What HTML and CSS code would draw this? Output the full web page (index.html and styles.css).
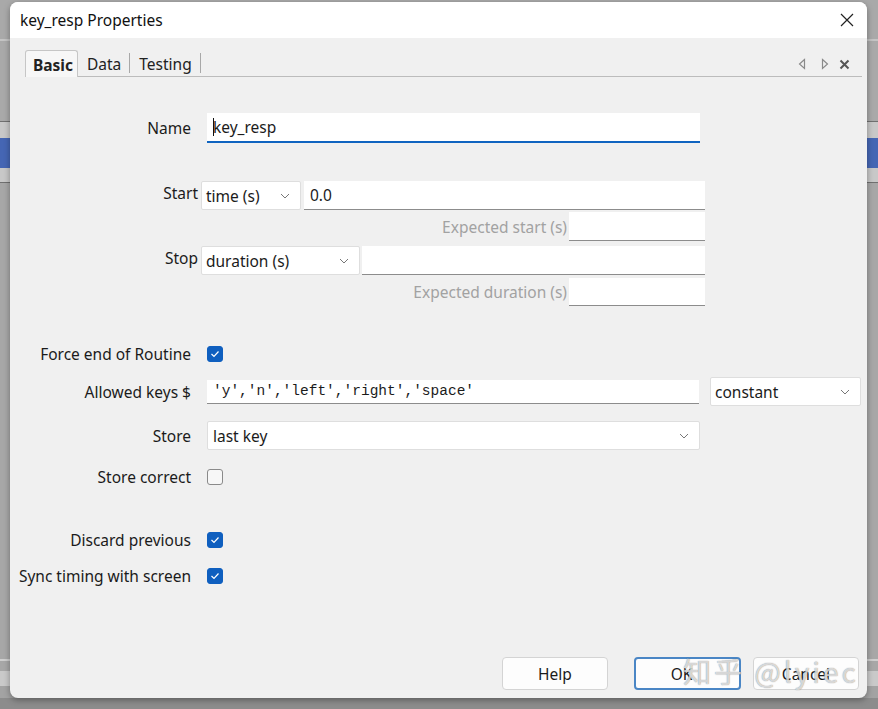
FILE: index.html
```html
<!DOCTYPE html>
<html lang="en">
<head>
    <meta charset="UTF-8">
    <meta name="viewport" content="width=device-width, initial-scale=1.0">
    <title>key_resp Properties</title>
    <link rel="stylesheet" href="styles.css">
</head>
<body>
<div class="window">
    <div class="titlebar">
        <span class="title">key_resp Properties</span>
        <svg class="close" width="14" height="14" viewBox="0 0 14 14">
            <path d="M1 1L13 13M13 1L1 13" stroke="#222" stroke-width="1.2" fill="none"/>
        </svg>
    </div>

    <div class="tabs">
        <div class="tab active">Basic</div>
        <div class="tab">Data</div>
        <div class="tab-sep"></div>
        <div class="tab">Testing</div>
        <div class="tab-sep"></div>
        <div class="tab-nav">
            <svg width="8" height="12" viewBox="0 0 8 12"><path d="M6.5 1.5L1.5 6L6.5 10.5Z" stroke="#8a8a8a" stroke-width="1.2" fill="none"/></svg>
            <svg width="8" height="12" viewBox="0 0 8 12"><path d="M1.5 1.5L6.5 6L1.5 10.5Z" stroke="#8a8a8a" stroke-width="1.2" fill="none"/></svg>
            <svg class="tab-close" width="11" height="11" viewBox="0 0 11 11"><path d="M1.5 1.5L9.5 9.5M9.5 1.5L1.5 9.5" stroke="#555" stroke-width="2" fill="none"/></svg>
        </div>
    </div>

    <div class="form">
        <div class="row name-row">
            <label class="label">Name</label>
            <div class="input focused w-name"><span class="caret"></span>key_resp</div>
        </div>

        <div class="row timing start-row">
            <label class="label">Start</label>
            <div class="select w-start">time (s)<svg class="chev" width="10" height="6" viewBox="0 0 10 6"><path d="M1 1L5 5L9 1" stroke="#777" fill="none"/></svg></div>
            <div class="input w-start-val">0.0</div>
        </div>
        <div class="row expected exp-start">
            <label class="label">Expected start (s)</label>
            <div class="input w-exp"></div>
        </div>

        <div class="row timing stop-row">
            <label class="label">Stop</label>
            <div class="select w-stop">duration (s)<svg class="chev" width="10" height="6" viewBox="0 0 10 6"><path d="M1 1L5 5L9 1" stroke="#777" fill="none"/></svg></div>
            <div class="input w-stop-val"></div>
        </div>
        <div class="row expected exp-stop">
            <label class="label">Expected duration (s)</label>
            <div class="input w-exp"></div>
        </div>

        <div class="row check-row force-row">
            <label class="label">Force end of Routine</label>
            <span class="checkbox checked"><svg width="10" height="8" viewBox="0 0 10 8"><path d="M1.5 4L4 6.5L8.5 1.5" stroke="#fff" stroke-width="1.2" fill="none"/></svg></span>
        </div>

        <div class="row keys-row">
            <label class="label">Allowed keys $</label>
            <div class="input mono w-keys">'y','n','left','right','space'</div>
            <div class="select w-const">constant<svg class="chev" width="10" height="6" viewBox="0 0 10 6"><path d="M1 1L5 5L9 1" stroke="#777" fill="none"/></svg></div>
        </div>

        <div class="row store-row">
            <label class="label">Store</label>
            <div class="select w-store">last key<svg class="chev" width="10" height="6" viewBox="0 0 10 6"><path d="M1 1L5 5L9 1" stroke="#777" fill="none"/></svg></div>
        </div>

        <div class="row check-row correct-row">
            <label class="label">Store correct</label>
            <span class="checkbox"></span>
        </div>

        <div class="row check-row discard-row">
            <label class="label">Discard previous</label>
            <span class="checkbox checked"><svg width="10" height="8" viewBox="0 0 10 8"><path d="M1.5 4L4 6.5L8.5 1.5" stroke="#fff" stroke-width="1.2" fill="none"/></svg></span>
        </div>

        <div class="row check-row sync-row">
            <label class="label">Sync timing with screen</label>
            <span class="checkbox checked"><svg width="10" height="8" viewBox="0 0 10 8"><path d="M1.5 4L4 6.5L8.5 1.5" stroke="#fff" stroke-width="1.2" fill="none"/></svg></span>
        </div>
    </div>

    <div class="buttons">
        <button class="btn">Help</button>
        <button class="btn default">OK</button>
        <button class="btn">Cancel</button>
    </div>
</div>
<div class="watermark">知乎 @lyiec</div>
</body>
</html>
```

FILE: styles.css
```css
* {
    margin: 0;
    padding: 0;
    box-sizing: border-box;
}

html, body {
    width: 100%;
    height: 100%;
}

body {
    font-family: "Noto Sans", "Liberation Sans", sans-serif;
    font-size: 15.5px;
    color: #1b1b1b;
    overflow: hidden;
    background: linear-gradient(to bottom,
        #a9a9a9 0 39px, #c4c4c4 39px 41px, #a9a9a9 41px 121px,
        #707070 121px 122px, #c8c8c8 122px 138px,
        #4566b4 138px 168px, #c8c8c8 168px 182px,
        #707070 182px 183px, #a7a7a7 183px 659px,
        #cfcfcf 659px 661px, #a7a7a7 661px 671px,
        #c9c9c9 671px 686px, #a3a3a3 686px 698px, #8c8c8c 698px);
    padding-top: 2px;
    padding-left: 10px;
}

.window {
    width: 857px;
    height: 696px;
    background: #f0f0f0;
    border-radius: 8px;
    display: flex;
    flex-direction: column;
    overflow: hidden;
    box-shadow: 0 2px 6px rgba(0, 0, 0, 0.35);
}

.titlebar {
    height: 36px;
    background: #fff;
    display: flex;
    align-items: center;
    justify-content: space-between;
    padding: 0 13px 0 10px;
}

.title {
    font-size: 15.5px;
    color: #111;
}

/* tab strip */
.tabs {
    height: 39px;
    margin: 0 5px 0 15px;
    padding-top: 12px;
    display: flex;
    align-items: flex-end;
    border-bottom: 1px solid #bcbcbc;
}

.tab {
    height: 26px;
    padding: 0 8px 0 9px;
    line-height: 29px;
    font-size: 15.5px;
    color: #222;
}

.tab.active {
    font-weight: bold;
    background: #f7f7f7;
    border: 1px solid #c6c6c6;
    border-bottom: none;
    border-radius: 3px 3px 0 0;
    padding: 0 3px 0 7px;
    width: 53px;
    margin-bottom: -1px;
    height: 27px;
    line-height: 28px;
}

.tab-sep {
    width: 1px;
    height: 20px;
    background: #a8a8a8;
    margin-bottom: 3px;
}

.tab-nav {
    margin-left: auto;
    align-self: center;
    display: flex;
    align-items: center;
    gap: 15px;
    padding-right: 12px;
    padding-top: 2px;
}

.tab-nav .tab-close {
    margin-left: -5px;
}

/* property rows */
.form {
    display: flex;
    flex-direction: column;
}

.row {
    display: flex;
    align-items: center;
    height: 29px;
}

.label {
    width: 181px;
    margin-right: 16px;
    text-align: right;
    white-space: nowrap;
}

.row.timing .label {
    width: 188px;
    margin-right: 3px;
    align-self: flex-start;
    padding-top: 1px;
}

.row.expected .label {
    width: 557px;
    margin-right: 2px;
    color: #a2a2a2;
}

.name-row { margin-top: 36px; height: 30px; }
.start-row { margin-top: 38px; }
.exp-start { margin-top: 2px; }
.stop-row { margin-top: 5px; }
.exp-stop { margin-top: 3px; height: 28px; }
.force-row { margin-top: 36px; height: 24px; }
.keys-row { margin-top: 11px; }
.store-row { margin-top: 15px; }
.correct-row { margin-top: 15px; height: 24px; }
.discard-row { margin-top: 39px; height: 24px; }
.sync-row { margin-top: 12px; height: 24px; }

.input {
    height: 100%;
    background: #fff;
    border-bottom: 1px solid #8c8c8c;
    padding-left: 6px;
    display: flex;
    align-items: center;
    white-space: nowrap;
}

.input.focused {
    border-bottom: 2px solid #0f64c0;
}

.caret {
    display: inline-block;
    width: 1px;
    height: 18px;
    background: #111;
    margin-right: -1px;
}

.mono {
    font-family: "Liberation Mono", monospace;
    font-size: 14.5px;
    height: 24px;
}

.select {
    height: 100%;
    background: #fff;
    border: 1px solid #dedede;
    border-radius: 2px;
    padding: 0 10px 0 4px;
    display: flex;
    align-items: center;
    justify-content: space-between;
}

.w-name { width: 493px; }
.w-start { width: 100px; margin-right: 3px; }
.w-start-val { width: 401px; }
.w-exp { width: 136px; }
.w-stop { width: 159px; margin-right: 2px; }
.w-stop-val { width: 343px; }
.w-keys { width: 492px; margin-right: 11px; }
.w-const { width: 151px; }
.w-store { width: 493px; padding-left: 5px; }

.checkbox {
    width: 16px;
    height: 16px;
    border-radius: 3px;
    border: 1px solid #8a8a8a;
    background: #f7f7f7;
    display: flex;
    align-items: center;
    justify-content: center;
}

.checkbox.checked {
    background: #0f5fbf;
    border-color: #0f5fbf;
}

/* dialog buttons */
.buttons {
    margin-top: auto;
    display: flex;
    justify-content: flex-end;
    padding: 0 8px 8px 0;
}

.btn {
    width: 106px;
    height: 33px;
    background: #fdfdfd;
    border: 1px solid #d4d4d4;
    border-radius: 4px;
    font-family: inherit;
    font-size: 15.5px;
    color: #1b1b1b;
}

.btn.default {
    width: 107px;
    margin-left: 26px;
    margin-right: 12px;
    border: 2px solid #4a86c5;
    padding-right: 12px;
}

.watermark {
    position: absolute;
    left: 683px;
    top: 651px;
    font-family: "Noto Sans CJK SC", "Noto Sans", sans-serif;
    font-size: 28px;
    letter-spacing: 3px;
    color: rgba(255, 255, 255, 0.7);
    text-shadow: 0 0 1px rgba(60, 60, 60, 0.7);
    white-space: nowrap;
}
```
